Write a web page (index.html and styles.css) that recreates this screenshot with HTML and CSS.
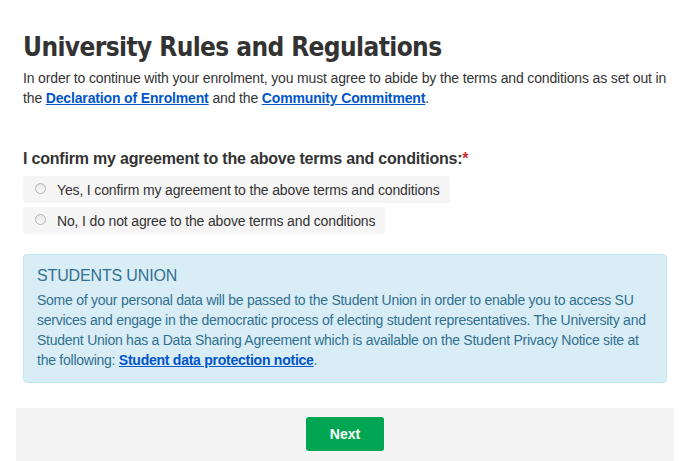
FILE: index.html
```html
<!DOCTYPE html>
<html lang="en">
<head>
  <meta charset="UTF-8" />
  <title>University Rules and Regulations</title>
  <link rel="stylesheet" href="styles.css">
</head>
<body>
  <div class="container">
    <h1>University Rules and Regulations</h1>
    <p class="intro">
      In order to continue with your enrolment, you must agree to abide by the terms and conditions as set out in
      the <a href="#">Declaration of Enrolment</a> and the <a href="#">Community Commitment</a>.
    </p>

    <h2 class="question">I confirm my agreement to the above terms and conditions:<span class="req">*</span></h2>

    <div class="options">
      <label class="option">
        <input type="radio" name="agree" value="yes" />
        <span class="dot"></span>
        Yes, I confirm my agreement to the above terms and conditions
      </label>
      <label class="option">
        <input type="radio" name="agree" value="no" />
        <span class="dot"></span>
        No, I do not agree to the above terms and conditions
      </label>
    </div>

    <div class="info">
      <div class="info-title">STUDENTS UNION</div>
      <p>
        Some of your personal data will be passed to the Student Union in order to enable you to access SU
        services and engage in the democratic process of electing student representatives. The University and
        Student Union has a Data Sharing Agreement which is available on the Student Privacy Notice site at
        the following: <a href="#">Student data protection notice</a>.
      </p>
    </div>

    <div class="footer">
      <button class="next">Next</button>
    </div>
  </div>
</body>
</html>
```

FILE: styles.css
```css
* { box-sizing: border-box; }
body {
  margin: 0;
  font-family: "Liberation Sans", Arial, sans-serif;
  font-size: 14px;
  line-height: 20px;
  letter-spacing: -0.15px;
  color: #333;
  background: #fff;
}

.container {
  padding: 0 19px 0 23px;
}

h1 {
  font-family: "DejaVu Sans Condensed", "Liberation Sans", sans-serif;
  font-size: 26px;
  font-weight: 700;
  letter-spacing: -0.6px;
  line-height: 32px;
  margin: 0;
  padding-top: 31px;
  color: #333;
}

.intro {
  margin: 5px 0 0;
}

a {
  color: #0056c8;
  font-weight: 700;
}

.question {
  font-size: 16px;
  font-weight: 700;
  letter-spacing: -0.2px;
  line-height: 20px;
  margin: 41px 0 0;
}

.req {
  color: #c9302c;
}

.options {
  margin-top: 7px;
}

.option {
  display: flex;
  align-items: center;
  width: fit-content;
  background: #f5f5f5;
  border-radius: 3px;
  padding: 4px 10px 3px 12px;
  height: 27px;
  margin-bottom: 4px;
}

.option input {
  display: none;
}

.dot {
  width: 11px;
  height: 11px;
  border-radius: 50%;
  border: 1px solid #b5b5b5;
  background: linear-gradient(#e6e6e6, #fafafa);
  margin-right: 11px;
  position: relative;
  top: -2px;
}

.info {
  margin-top: 20px;
  background: #d9edf7;
  border: 1px solid #bce8f1;
  border-radius: 4px;
  color: #31708f;
  padding: 10px 13px 12px;
}

.info-title {
  font-size: 16px;
  line-height: 22px;
  margin-bottom: 3px;
}

.info p {
  margin: 0;
  letter-spacing: -0.25px;
}

.footer {
  margin: 25px -7px 0;
  background: #f4f4f4;
  padding: 9px 0 12px;
  display: flex;
  justify-content: center;
}

.next {
  width: 78px;
  height: 34px;
  background: #00a651;
  color: #fff;
  border: none;
  border-radius: 3px;
  font-family: "Liberation Sans", Arial, sans-serif;
  font-size: 14px;
  font-weight: 700;
  cursor: pointer;
}
```
